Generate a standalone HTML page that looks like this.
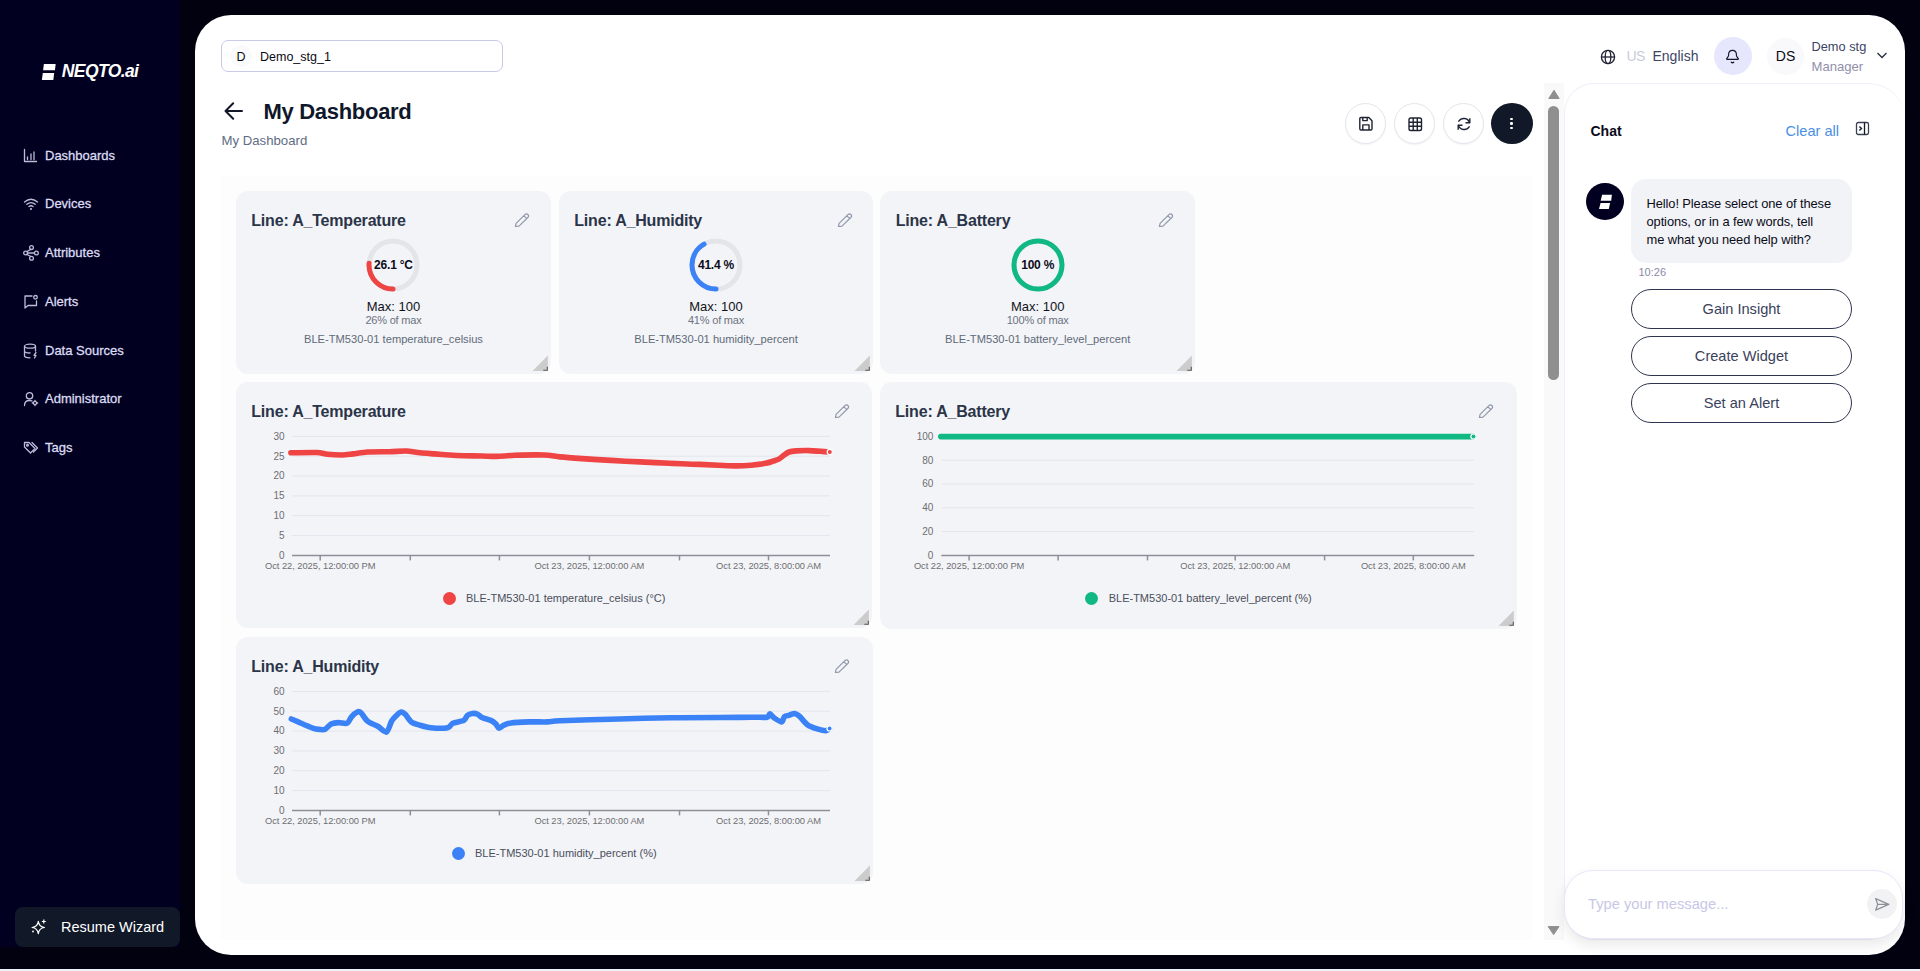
<!DOCTYPE html><html><head><meta charset="utf-8"><style>
html,body{margin:0;padding:0;}
body{width:1920px;height:971px;overflow:hidden;position:relative;background:#02010f;font-family:"Liberation Sans", sans-serif;}
.a{position:absolute;}
.t{position:absolute;white-space:nowrap;font-family:"Liberation Sans", sans-serif;}
</style></head><body>
<div class="a" style="left:0px;top:969px;width:1920px;height:2px;background:#eef2f6;"></div>
<div class="a" style="left:0px;top:0px;width:180px;height:947px;background:#010021;"></div>
<svg class="a" style="left:40px;top:62px;" width="18" height="20" viewBox="0 0 18 20"><path d="M3.9 2.1 H15.7 L14.9 8.3 H3.1 Z" fill="#fff"/><path d="M2.8 11.1 H14.2 L13.3 18 H1.9 Z" fill="#fff"/></svg>
<div class="t" style="left:61.8px;top:63.47px;font-size:17.5px;line-height:17.5px;color:#ffffff;font-weight:700;letter-spacing:-0.6px;font-style:italic;">NEQTO.ai</div>
<div class="t" style="left:45px;top:149.23px;font-size:13px;line-height:13px;color:#dcdcf2;font-weight:400;-webkit-text-stroke:0.3px #dcdcf2;">Dashboards</div>
<div class="t" style="left:45px;top:197.23px;font-size:13px;line-height:13px;color:#dcdcf2;font-weight:400;-webkit-text-stroke:0.3px #dcdcf2;">Devices</div>
<div class="t" style="left:45px;top:245.73px;font-size:13px;line-height:13px;color:#dcdcf2;font-weight:400;-webkit-text-stroke:0.3px #dcdcf2;">Attributes</div>
<div class="t" style="left:45px;top:294.73px;font-size:13px;line-height:13px;color:#dcdcf2;font-weight:400;-webkit-text-stroke:0.3px #dcdcf2;">Alerts</div>
<div class="t" style="left:45px;top:343.73px;font-size:13px;line-height:13px;color:#dcdcf2;font-weight:400;-webkit-text-stroke:0.3px #dcdcf2;">Data Sources</div>
<div class="t" style="left:45px;top:392.23px;font-size:13px;line-height:13px;color:#dcdcf2;font-weight:400;-webkit-text-stroke:0.3px #dcdcf2;">Administrator</div>
<div class="t" style="left:45px;top:440.73px;font-size:13px;line-height:13px;color:#dcdcf2;font-weight:400;-webkit-text-stroke:0.3px #dcdcf2;">Tags</div>
<svg class="a" style="left:23px;top:148px;" width="16" height="16" viewBox="0 0 16 16"><path d="M1.5 1.5 V13.5 H13.5" fill="none" stroke="#bcbcd8" stroke-width="1.3" stroke-linecap="round" stroke-linejoin="round"/><path d="M4.5 9 V11.5 M8 6 V11.5 M11 4 V11.5" fill="none" stroke="#bcbcd8" stroke-width="1.3" stroke-linecap="round" stroke-linejoin="round"/></svg>
<svg class="a" style="left:22.5px;top:196px;" width="16" height="16" viewBox="0 0 16 16"><path d="M1.5 6 Q8 0.5 14.5 6 M3.8 8.3 Q8 4.8 12.2 8.3 M6 10.5 Q8 9 10 10.5" fill="none" stroke="#bcbcd8" stroke-width="1.3" stroke-linecap="round" stroke-linejoin="round"/><circle cx="8" cy="13" r="0.9" fill="#e0e0f0"/></svg>
<svg class="a" style="left:23px;top:245px;" width="16" height="16" viewBox="0 0 16 16"><circle cx="8.5" cy="2.6" r="1.9" fill="none" stroke="#bcbcd8" stroke-width="1.3" stroke-linecap="round" stroke-linejoin="round"/><circle cx="2.6" cy="8" r="1.9" fill="none" stroke="#bcbcd8" stroke-width="1.3" stroke-linecap="round" stroke-linejoin="round"/><circle cx="13.4" cy="8" r="1.9" fill="none" stroke="#bcbcd8" stroke-width="1.3" stroke-linecap="round" stroke-linejoin="round"/><circle cx="8.5" cy="13.2" r="1.9" fill="none" stroke="#bcbcd8" stroke-width="1.3" stroke-linecap="round" stroke-linejoin="round"/><path d="M4.5 8 H11.5 M7.8 4.4 L4 6.5 M7.8 11.5 L4 9.5" fill="none" stroke="#bcbcd8" stroke-width="1.3" stroke-linecap="round" stroke-linejoin="round"/></svg>
<svg class="a" style="left:23px;top:294px;" width="16" height="16" viewBox="0 0 16 16"><path d="M9 2 H2 V14 L5 11.5 H13.5 V7" fill="none" stroke="#bcbcd8" stroke-width="1.3" stroke-linecap="round" stroke-linejoin="round"/><circle cx="12.5" cy="3.3" r="1.8" fill="none" stroke="#bcbcd8" stroke-width="1.3" stroke-linecap="round" stroke-linejoin="round"/></svg>
<svg class="a" style="left:23px;top:343px;" width="16" height="16" viewBox="0 0 16 16"><ellipse cx="7" cy="3.2" rx="5.5" ry="2" fill="none" stroke="#bcbcd8" stroke-width="1.3" stroke-linecap="round" stroke-linejoin="round"/><path d="M1.5 3.2 V12.8 Q1.5 14.8 7 14.8 M12.5 3.2 V8 M1.5 8 Q1.5 10 7 10" fill="none" stroke="#bcbcd8" stroke-width="1.3" stroke-linecap="round" stroke-linejoin="round"/><path d="M13 9.5 L11 12.3 H13 L11.5 15" fill="none" stroke="#bcbcd8" stroke-width="1.3" stroke-linecap="round" stroke-linejoin="round"/></svg>
<svg class="a" style="left:23px;top:391px;" width="16" height="16" viewBox="0 0 16 16"><circle cx="6.5" cy="4.8" r="3.2" fill="none" stroke="#bcbcd8" stroke-width="1.3" stroke-linecap="round" stroke-linejoin="round"/><path d="M1.5 14.5 Q1.5 9.5 6.5 9.5 Q8 9.5 9 10" fill="none" stroke="#bcbcd8" stroke-width="1.3" stroke-linecap="round" stroke-linejoin="round"/><circle cx="12" cy="12" r="1.6" fill="none" stroke="#bcbcd8" stroke-width="1.3" stroke-linecap="round" stroke-linejoin="round"/><path d="M12 9.3 V10 M12 14 V14.7 M9.3 12 H10 M14 12 H14.7" fill="none" stroke="#bcbcd8" stroke-width="1.3" stroke-linecap="round" stroke-linejoin="round"/></svg>
<svg class="a" style="left:23px;top:440px;" width="16" height="16" viewBox="0 0 16 16"><path d="M1.5 2.5 V7 L7.5 13 L12 8.5 L6 2.5 Z" fill="none" stroke="#bcbcd8" stroke-width="1.3" stroke-linecap="round" stroke-linejoin="round"/><circle cx="4.5" cy="5.3" r="0.9" fill="none" stroke="#bcbcd8" stroke-width="1.3" stroke-linecap="round" stroke-linejoin="round"/><path d="M9 2.5 L14.5 8 L10.5 12" fill="none" stroke="#bcbcd8" stroke-width="1.3" stroke-linecap="round" stroke-linejoin="round"/></svg>
<div class="a" style="left:15px;top:907px;width:165px;height:40px;background:#111827;border-radius:8px;"></div>
<svg class="a" style="left:30px;top:918px;" width="18" height="18" viewBox="0 0 18 18"><path d="M8.3 3.3 Q9 8.8 14.5 9.5 Q9 10.2 8.3 15.7 Q7.6 10.2 2.1 9.5 Q7.6 8.8 8.3 3.3 Z" fill="none" stroke="#fff" stroke-width="1.2" stroke-linejoin="round"/><path d="M13.8 1.5 V5.5 M11.8 3.5 H15.8" stroke="#fff" stroke-width="1.2"/><circle cx="3" cy="13.5" r="0.9" fill="#fff"/></svg>
<div class="t" style="left:61px;top:919.71px;font-size:14.5px;line-height:14.5px;color:#ffffff;font-weight:400;">Resume Wizard</div>
<div class="a" style="left:195px;top:15px;width:1710px;height:940px;background:#ffffff;border-radius:36px;"></div>
<div class="a" style="left:221px;top:40px;width:282px;height:32px;box-sizing:border-box;border:1.2px solid #c9c9ea;border-radius:7px;background:#fff;"></div>
<div class="a" style="left:230px;top:45px;width:22px;height:22px;background:#fafafb;border-radius:50%;"></div>
<div class="t" style="left:-259px;width:1000px;text-align:center;top:50.68px;font-size:12.5px;line-height:12.5px;color:#0a0a14;font-weight:400;">D</div>
<div class="t" style="left:260px;top:50.77px;font-size:12.5px;line-height:12.5px;color:#0a0a14;font-weight:400;">Demo_stg_1</div>
<svg class="a" style="left:1599.6px;top:48.5px;" width="16" height="16" viewBox="0 0 16 16"><circle cx="8" cy="8" r="6.6" fill="none" stroke="#1f2233" stroke-width="1.3"/><ellipse cx="8" cy="8" rx="2.8" ry="6.6" fill="none" stroke="#1f2233" stroke-width="1.3"/><path d="M1.4 8 H14.6" stroke="#1f2233" stroke-width="1.3"/></svg>
<div class="t" style="left:1626.5px;top:48.95px;font-size:14px;line-height:14px;color:#c8ccd8;font-weight:400;letter-spacing:-0.5px;">US</div>
<div class="t" style="left:1652.5px;top:48.95px;font-size:14px;line-height:14px;color:#3d4465;font-weight:400;">English</div>
<div class="a" style="left:1714px;top:37.3px;width:38px;height:38px;background:#e6e6fc;border-radius:50%;"></div>
<svg class="a" style="left:1724px;top:47px;" width="18" height="18" viewBox="0 0 18 18"><path d="M2.9 12.4 Q2.3 12.3 2.9 11.4 L4.1 9.7 Q4.6 9 4.6 8 V7.6 Q4.6 3.3 8.5 3.3 Q12.4 3.3 12.4 7.6 V8 Q12.4 9 12.9 9.7 L14.1 11.4 Q14.7 12.3 14.1 12.4 Z" fill="none" stroke="#141826" stroke-width="1.15" stroke-linejoin="round"/><path d="M7.3 15.2 Q8.5 16.3 9.7 15.2" fill="none" stroke="#141826" stroke-width="1.3" stroke-linecap="round"/></svg>
<div class="a" style="left:1767px;top:37.5px;width:37px;height:37px;background:#f9f9fb;border-radius:50%;"></div>
<div class="t" style="left:1285.5px;width:1000px;text-align:center;top:48.95px;font-size:14px;line-height:14px;color:#0a0a14;font-weight:400;">DS</div>
<div class="t" style="left:1811.5px;top:41.03px;font-size:12.8px;line-height:12.8px;color:#3d4465;font-weight:400;">Demo stg</div>
<div class="t" style="left:1811.5px;top:60.49px;font-size:13.1px;line-height:13.1px;color:#9090aa;font-weight:400;">Manager</div>
<svg class="a" style="left:1876px;top:51px;" width="12" height="9" viewBox="0 0 12 9"><path d="M1.5 2 L6 6.5 L10.5 2" fill="none" stroke="#2a2f45" stroke-width="1.4"/></svg>
<svg class="a" style="left:223px;top:101px;" width="22" height="20" viewBox="0 0 22 20"><path d="M19 10 H3 M10.2 2.2 L2.5 10 L10.2 17.8" fill="none" stroke="#111827" stroke-width="2" stroke-linecap="round" stroke-linejoin="round"/></svg>
<div class="t" style="left:263.5px;top:100.60px;font-size:22px;line-height:22px;color:#0f172a;font-weight:700;letter-spacing:-0.3px;">My Dashboard</div>
<div class="t" style="left:221.5px;top:133.94px;font-size:13.2px;line-height:13.2px;color:#5f6c85;font-weight:400;">My Dashboard</div>
<div class="a" style="left:1344.5px;top:102.8px;width:41px;height:41px;box-sizing:border-box;border:1.5px solid #e3e6ec;border-radius:50%;background:#fff;box-shadow:0 1px 2px rgba(0,0,0,0.05);"></div>
<div class="a" style="left:1393.5px;top:102.8px;width:41px;height:41px;box-sizing:border-box;border:1.5px solid #e3e6ec;border-radius:50%;background:#fff;box-shadow:0 1px 2px rgba(0,0,0,0.05);"></div>
<div class="a" style="left:1442.5px;top:102.8px;width:41px;height:41px;box-sizing:border-box;border:1.5px solid #e3e6ec;border-radius:50%;background:#fff;box-shadow:0 1px 2px rgba(0,0,0,0.05);"></div>
<div class="a" style="left:1491.2px;top:102.8px;width:41.6px;height:41.2px;background:#111827;border-radius:50%;"></div>
<svg class="a" style="left:1358px;top:116px;" width="16" height="16" viewBox="0 0 16 16"><path d="M1.8 2.8 Q1.8 1.5 3 1.5 H10.8 L14 4.7 V12.8 Q14 14 12.8 14 H3 Q1.8 14 1.8 12.8 Z" fill="none" stroke="#1e2433" stroke-width="1.4" stroke-linejoin="round"/><path d="M4.8 1.5 V4.6 H9.2 V1.5" fill="none" stroke="#1e2433" stroke-width="1.4" stroke-linejoin="round"/><path d="M4.8 14 V8.9 H11 V14" fill="none" stroke="#1e2433" stroke-width="1.4" stroke-linejoin="round"/></svg>
<svg class="a" style="left:1406.5px;top:115.5px;" width="16" height="16" viewBox="0 0 16 16"><rect x="2" y="2" width="12.5" height="12.5" rx="1.8" fill="none" stroke="#1e2433" stroke-width="1.4" stroke-linejoin="round"/><path d="M6.2 2 V14.5 M10.3 2 V14.5 M2 6.2 H14.5 M2 10.3 H14.5" fill="none" stroke="#1e2433" stroke-width="1.4" stroke-linejoin="round"/></svg>
<svg class="a" style="left:1455.5px;top:115.8px;" width="16" height="16" viewBox="0 0 16 16"><path d="M13.5 6.5 A6 6 0 0 0 2.8 5.2 M2.5 9.5 A6 6 0 0 0 13.2 10.8" fill="none" stroke="#1e2433" stroke-width="1.4" stroke-linejoin="round" stroke-linecap="round"/><path d="M13.8 2.2 V6.8 H9.5" fill="none" stroke="#1e2433" stroke-width="1.4" stroke-linejoin="round"/><path d="M2.2 13.8 V9.2 H6.5" fill="none" stroke="#1e2433" stroke-width="1.4" stroke-linejoin="round"/></svg>
<div class="a" style="left:1510.2px;top:117.60000000000001px;width:2.6px;height:2.6px;background:#fff;border-radius:50%;"></div>
<div class="a" style="left:1510.2px;top:122.10000000000001px;width:2.6px;height:2.6px;background:#fff;border-radius:50%;"></div>
<div class="a" style="left:1510.2px;top:126.60000000000001px;width:2.6px;height:2.6px;background:#fff;border-radius:50%;"></div>
<div class="a" style="left:221px;top:176px;width:1312px;height:764px;background:#fdfdfd;"></div>
<div class="a" style="left:1544px;top:83px;width:19.5px;height:857px;background:#f9f9f9;"></div>
<svg class="a" style="left:1547.5px;top:88.5px;" width="12" height="11" viewBox="0 0 12 11"><path d="M6 1.3 L11.2 9.5 H0.8 Z" fill="#8f8f8f" stroke="#8f8f8f" stroke-width="1" stroke-linejoin="round"/></svg>
<div class="a" style="left:1548px;top:106px;width:11px;height:274px;background:#8f8f8f;border-radius:6px;"></div>
<svg class="a" style="left:1547px;top:924.5px;" width="14" height="11" viewBox="0 0 14 11"><path d="M1.2 1.6 H12 L6.6 9.6 Z" fill="#8f8f8f" stroke="#8f8f8f" stroke-width="1" stroke-linejoin="round"/></svg>
<div class="a" style="left:236px;top:190.8px;width:314.9px;height:183px;background:#f3f4f7;border-radius:12px;"></div>
<svg class="a" style="left:531.9px;top:354.8px;" width="16" height="16" viewBox="0 0 16 16"><path d="M15.9 0.5 V15.9 H0.5 Z" fill="#cccccc"/><path d="M15.3 11.8 V15.3 H11.3" fill="none" stroke="#5a5a5a" stroke-width="1.1"/></svg>
<div class="t" style="left:251.3px;top:213.29px;font-size:16px;line-height:16px;color:#2b3448;font-weight:700;letter-spacing:-0.2px;">Line: A_Temperature</div>
<svg class="a" style="left:514px;top:212px;" width="16" height="16" viewBox="0 0 16 16"><path d="M1.4 14.4 L2.1 11.4 L10.9 2.6 Q12.5 1.1 13.9 2.5 Q15.3 3.9 13.8 5.5 L5 14.1 Z M9.9 3.8 L12.6 6.3" fill="none" stroke="#8e97aa" stroke-width="1.15" stroke-linejoin="round"/></svg>
<svg class="a" style="left:363.45px;top:235px;" width="60" height="60" viewBox="0 0 60 60"><circle cx="30" cy="30" r="24" fill="none" stroke="#e4e5e9" stroke-width="5"/><circle cx="30" cy="30" r="24" fill="none" stroke="#ef4444" stroke-width="5" stroke-linecap="round" stroke-dasharray="39.21 150.80" transform="rotate(90 30 30)"/></svg>
<div class="t" style="left:-106.55000000000001px;width:1000px;text-align:center;top:258.72px;font-size:12px;line-height:12px;color:#0b0b1a;font-weight:700;letter-spacing:-0.2px;">26.1 °C</div>
<div class="t" style="left:-106.55000000000001px;width:1000px;text-align:center;top:300.03px;font-size:13px;line-height:13px;color:#111320;font-weight:400;">Max: 100</div>
<div class="t" style="left:-106.55000000000001px;width:1000px;text-align:center;top:314.70px;font-size:11px;line-height:11px;color:#6b7280;font-weight:400;letter-spacing:-0.2px;">26% of max</div>
<div class="t" style="left:-106.55000000000001px;width:1000px;text-align:center;top:333.63px;font-size:11.15px;line-height:11.15px;color:#5f6b7a;font-weight:400;">BLE-TM530-01 temperature_celsius</div>
<div class="a" style="left:559px;top:190.8px;width:314px;height:183px;background:#f3f4f7;border-radius:12px;"></div>
<svg class="a" style="left:854px;top:354.8px;" width="16" height="16" viewBox="0 0 16 16"><path d="M15.9 0.5 V15.9 H0.5 Z" fill="#cccccc"/><path d="M15.3 11.8 V15.3 H11.3" fill="none" stroke="#5a5a5a" stroke-width="1.1"/></svg>
<div class="t" style="left:574.3px;top:213.29px;font-size:16px;line-height:16px;color:#2b3448;font-weight:700;letter-spacing:-0.2px;">Line: A_Humidity</div>
<svg class="a" style="left:837px;top:212px;" width="16" height="16" viewBox="0 0 16 16"><path d="M1.4 14.4 L2.1 11.4 L10.9 2.6 Q12.5 1.1 13.9 2.5 Q15.3 3.9 13.8 5.5 L5 14.1 Z M9.9 3.8 L12.6 6.3" fill="none" stroke="#8e97aa" stroke-width="1.15" stroke-linejoin="round"/></svg>
<svg class="a" style="left:686.0px;top:235px;" width="60" height="60" viewBox="0 0 60 60"><circle cx="30" cy="30" r="24" fill="none" stroke="#e4e5e9" stroke-width="5"/><circle cx="30" cy="30" r="24" fill="none" stroke="#3b82f6" stroke-width="5" stroke-linecap="round" stroke-dasharray="62.43 150.80" transform="rotate(90 30 30)"/></svg>
<div class="t" style="left:216.0px;width:1000px;text-align:center;top:258.72px;font-size:12px;line-height:12px;color:#0b0b1a;font-weight:700;letter-spacing:-0.2px;">41.4 %</div>
<div class="t" style="left:216.0px;width:1000px;text-align:center;top:300.03px;font-size:13px;line-height:13px;color:#111320;font-weight:400;">Max: 100</div>
<div class="t" style="left:216.0px;width:1000px;text-align:center;top:314.70px;font-size:11px;line-height:11px;color:#6b7280;font-weight:400;letter-spacing:-0.2px;">41% of max</div>
<div class="t" style="left:216.0px;width:1000px;text-align:center;top:333.63px;font-size:11.15px;line-height:11.15px;color:#5f6b7a;font-weight:400;">BLE-TM530-01 humidity_percent</div>
<div class="a" style="left:880.4px;top:190.8px;width:314.6px;height:183px;background:#f3f4f7;border-radius:12px;"></div>
<svg class="a" style="left:1176.0px;top:354.8px;" width="16" height="16" viewBox="0 0 16 16"><path d="M15.9 0.5 V15.9 H0.5 Z" fill="#cccccc"/><path d="M15.3 11.8 V15.3 H11.3" fill="none" stroke="#5a5a5a" stroke-width="1.1"/></svg>
<div class="t" style="left:895.6999999999999px;top:213.29px;font-size:16px;line-height:16px;color:#2b3448;font-weight:700;letter-spacing:-0.2px;">Line: A_Battery</div>
<svg class="a" style="left:1158.4px;top:212px;" width="16" height="16" viewBox="0 0 16 16"><path d="M1.4 14.4 L2.1 11.4 L10.9 2.6 Q12.5 1.1 13.9 2.5 Q15.3 3.9 13.8 5.5 L5 14.1 Z M9.9 3.8 L12.6 6.3" fill="none" stroke="#8e97aa" stroke-width="1.15" stroke-linejoin="round"/></svg>
<svg class="a" style="left:1007.7px;top:235px;" width="60" height="60" viewBox="0 0 60 60"><circle cx="30" cy="30" r="24" fill="none" stroke="#e4e5e9" stroke-width="5"/><circle cx="30" cy="30" r="24" fill="none" stroke="#10b981" stroke-width="5"/></svg>
<div class="t" style="left:537.7px;width:1000px;text-align:center;top:258.72px;font-size:12px;line-height:12px;color:#0b0b1a;font-weight:700;letter-spacing:-0.2px;">100 %</div>
<div class="t" style="left:537.7px;width:1000px;text-align:center;top:300.03px;font-size:13px;line-height:13px;color:#111320;font-weight:400;">Max: 100</div>
<div class="t" style="left:537.7px;width:1000px;text-align:center;top:314.70px;font-size:11px;line-height:11px;color:#6b7280;font-weight:400;letter-spacing:-0.2px;">100% of max</div>
<div class="t" style="left:537.7px;width:1000px;text-align:center;top:333.63px;font-size:11.15px;line-height:11.15px;color:#5f6b7a;font-weight:400;">BLE-TM530-01 battery_level_percent</div>
<div class="a" style="left:236px;top:382px;width:636.4px;height:246.4px;background:#f3f4f7;border-radius:12px;"></div>
<svg class="a" style="left:853.4px;top:609.4px;" width="16" height="16" viewBox="0 0 16 16"><path d="M15.9 0.5 V15.9 H0.5 Z" fill="#cccccc"/><path d="M15.3 11.8 V15.3 H11.3" fill="none" stroke="#5a5a5a" stroke-width="1.1"/></svg>
<div class="t" style="left:251.3px;top:403.79px;font-size:16px;line-height:16px;color:#2b3448;font-weight:700;letter-spacing:-0.2px;">Line: A_Temperature</div>
<svg class="a" style="left:834px;top:403px;" width="16" height="16" viewBox="0 0 16 16"><path d="M1.4 14.4 L2.1 11.4 L10.9 2.6 Q12.5 1.1 13.9 2.5 Q15.3 3.9 13.8 5.5 L5 14.1 Z M9.9 3.8 L12.6 6.3" fill="none" stroke="#8e97aa" stroke-width="1.15" stroke-linejoin="round"/></svg>
<svg class="a" style="left:0;top:0" width="1920" height="971" viewBox="0 0 1920 971"><line x1="292" y1="535.6" x2="830" y2="535.6" stroke="#e2e6ee" stroke-width="1"/><line x1="292" y1="515.7" x2="830" y2="515.7" stroke="#e2e6ee" stroke-width="1"/><line x1="292" y1="495.9" x2="830" y2="495.9" stroke="#e2e6ee" stroke-width="1"/><line x1="292" y1="476.1" x2="830" y2="476.1" stroke="#e2e6ee" stroke-width="1"/><line x1="292" y1="456.2" x2="830" y2="456.2" stroke="#e2e6ee" stroke-width="1"/><line x1="292" y1="436.4" x2="830" y2="436.4" stroke="#e2e6ee" stroke-width="1"/><line x1="292" y1="555.4" x2="830" y2="555.4" stroke="#8a8f99" stroke-width="1.5"/><line x1="320.2" y1="555.4" x2="320.2" y2="560.4" stroke="#8a8f99" stroke-width="1.5"/><line x1="410.3" y1="555.4" x2="410.3" y2="560.4" stroke="#8a8f99" stroke-width="1.5"/><line x1="499.4" y1="555.4" x2="499.4" y2="560.4" stroke="#8a8f99" stroke-width="1.5"/><line x1="589.4" y1="555.4" x2="589.4" y2="560.4" stroke="#8a8f99" stroke-width="1.5"/><line x1="679.5" y1="555.4" x2="679.5" y2="560.4" stroke="#8a8f99" stroke-width="1.5"/><line x1="768.5" y1="555.4" x2="768.5" y2="560.4" stroke="#8a8f99" stroke-width="1.5"/><path d="M290.9,452.8 C294.5,452.8 311.4,452.3 316.5,452.5 C321.6,452.7 323.8,453.8 327.4,454.2 C331.0,454.6 338.4,455.0 342.0,455.0 C345.6,455.0 349.3,454.3 352.9,453.9 C356.5,453.5 362.4,452.3 367.5,452.0 C372.6,451.7 384.0,451.8 389.4,451.7 C394.8,451.6 401.9,450.8 406.2,451.0 C410.5,451.2 416.0,452.4 420.0,452.8 C424.0,453.2 430.5,453.6 434.6,453.9 C438.7,454.2 445.1,454.7 449.2,455.0 C453.3,455.3 459.2,455.6 463.8,455.7 C468.4,455.8 477.4,455.9 482.0,456.0 C486.6,456.1 492.0,456.5 496.6,456.4 C501.2,456.3 508.2,455.5 514.8,455.3 C521.4,455.1 537.7,454.8 544.0,455.0 C550.3,455.2 554.7,456.4 560.0,456.9 C565.3,457.4 574.8,458.1 581.9,458.6 C589.0,459.1 602.8,459.9 611.0,460.4 C619.2,460.9 632.0,461.5 640.2,461.9 C648.4,462.3 661.0,462.9 669.4,463.3 C677.8,463.7 693.2,464.1 700.0,464.4 C706.8,464.7 713.1,465.0 718.2,465.2 C723.3,465.4 731.9,465.9 736.5,465.9 C741.1,465.9 746.9,465.6 751.0,465.2 C755.1,464.8 762.5,463.9 765.6,463.3 C768.7,462.7 771.1,461.8 772.9,461.2 C774.7,460.6 777.3,459.9 778.8,459.1 C780.3,458.3 782.5,456.3 783.9,455.3 C785.3,454.3 787.3,452.6 789.0,452.0 C790.7,451.4 793.4,451.1 796.3,450.9 C799.2,450.7 806.0,450.5 809.4,450.6 C812.8,450.7 817.4,451.1 820.3,451.3 C823.2,451.5 828.5,451.9 829.8,452.0" fill="none" stroke="#ef4444" stroke-width="5.6" stroke-linecap="round" stroke-linejoin="round"/><circle cx="829.8" cy="452" r="2.6" fill="#ef4444" stroke="#fff" stroke-width="1.2"/></svg>
<div class="t" style="left:-715.4px;width:1000px;text-align:right;top:550.78px;font-size:10px;line-height:10px;color:#6e6e72;font-weight:400;">0</div>
<div class="t" style="left:-715.4px;width:1000px;text-align:right;top:530.95px;font-size:10px;line-height:10px;color:#6e6e72;font-weight:400;">5</div>
<div class="t" style="left:-715.4px;width:1000px;text-align:right;top:511.11px;font-size:10px;line-height:10px;color:#6e6e72;font-weight:400;">10</div>
<div class="t" style="left:-715.4px;width:1000px;text-align:right;top:491.28px;font-size:10px;line-height:10px;color:#6e6e72;font-weight:400;">15</div>
<div class="t" style="left:-715.4px;width:1000px;text-align:right;top:471.45px;font-size:10px;line-height:10px;color:#6e6e72;font-weight:400;">20</div>
<div class="t" style="left:-715.4px;width:1000px;text-align:right;top:451.61px;font-size:10px;line-height:10px;color:#6e6e72;font-weight:400;">25</div>
<div class="t" style="left:-715.4px;width:1000px;text-align:right;top:431.78px;font-size:10px;line-height:10px;color:#6e6e72;font-weight:400;">30</div>
<div class="t" style="left:-179.8px;width:1000px;text-align:center;top:561.99px;font-size:9.35px;line-height:9.35px;color:#6e6e72;font-weight:400;letter-spacing:-0.05px;">Oct 22, 2025, 12:00:00 PM</div>
<div class="t" style="left:89.39999999999998px;width:1000px;text-align:center;top:561.99px;font-size:9.35px;line-height:9.35px;color:#6e6e72;font-weight:400;letter-spacing:-0.05px;">Oct 23, 2025, 12:00:00 AM</div>
<div class="t" style="left:268.5px;width:1000px;text-align:center;top:561.99px;font-size:9.35px;line-height:9.35px;color:#6e6e72;font-weight:400;letter-spacing:-0.05px;">Oct 23, 2025, 8:00:00 AM</div>
<div class="a" style="left:442.5px;top:591.5px;width:13px;height:13px;background:#ef4444;border-radius:50%;"></div>
<div class="t" style="left:466px;top:592.90px;font-size:11px;line-height:11px;color:#4a4f5c;font-weight:400;">BLE-TM530-01 temperature_celsius (°C)</div>
<div class="a" style="left:880px;top:382px;width:636.8px;height:246.8px;background:#f3f4f7;border-radius:12px;"></div>
<svg class="a" style="left:1497.8px;top:609.8px;" width="16" height="16" viewBox="0 0 16 16"><path d="M15.9 0.5 V15.9 H0.5 Z" fill="#cccccc"/><path d="M15.3 11.8 V15.3 H11.3" fill="none" stroke="#5a5a5a" stroke-width="1.1"/></svg>
<div class="t" style="left:895.3px;top:403.79px;font-size:16px;line-height:16px;color:#2b3448;font-weight:700;letter-spacing:-0.2px;">Line: A_Battery</div>
<svg class="a" style="left:1478px;top:403px;" width="16" height="16" viewBox="0 0 16 16"><path d="M1.4 14.4 L2.1 11.4 L10.9 2.6 Q12.5 1.1 13.9 2.5 Q15.3 3.9 13.8 5.5 L5 14.1 Z M9.9 3.8 L12.6 6.3" fill="none" stroke="#8e97aa" stroke-width="1.15" stroke-linejoin="round"/></svg>
<svg class="a" style="left:0;top:0" width="1920" height="971" viewBox="0 0 1920 971"><line x1="941.3" y1="531.6" x2="1474.2" y2="531.6" stroke="#e2e6ee" stroke-width="1"/><line x1="941.3" y1="507.8" x2="1474.2" y2="507.8" stroke="#e2e6ee" stroke-width="1"/><line x1="941.3" y1="484.0" x2="1474.2" y2="484.0" stroke="#e2e6ee" stroke-width="1"/><line x1="941.3" y1="460.2" x2="1474.2" y2="460.2" stroke="#e2e6ee" stroke-width="1"/><line x1="941.3" y1="436.4" x2="1474.2" y2="436.4" stroke="#e2e6ee" stroke-width="1"/><line x1="941.3" y1="555.4" x2="1474.2" y2="555.4" stroke="#8a8f99" stroke-width="1.5"/><line x1="969.1" y1="555.4" x2="969.1" y2="560.4" stroke="#8a8f99" stroke-width="1.5"/><line x1="1058.1" y1="555.4" x2="1058.1" y2="560.4" stroke="#8a8f99" stroke-width="1.5"/><line x1="1147.5" y1="555.4" x2="1147.5" y2="560.4" stroke="#8a8f99" stroke-width="1.5"/><line x1="1235.2" y1="555.4" x2="1235.2" y2="560.4" stroke="#8a8f99" stroke-width="1.5"/><line x1="1324.6" y1="555.4" x2="1324.6" y2="560.4" stroke="#8a8f99" stroke-width="1.5"/><line x1="1413.3" y1="555.4" x2="1413.3" y2="560.4" stroke="#8a8f99" stroke-width="1.5"/><path d="M940.8,436.6 C1015.4,436.6 1398.9,436.6 1473.5,436.6" fill="none" stroke="#10b981" stroke-width="5.6" stroke-linecap="round" stroke-linejoin="round"/><circle cx="1473.5" cy="436.6" r="2.6" fill="#10b981" stroke="#fff" stroke-width="1.2"/></svg>
<div class="t" style="left:-66.60000000000002px;width:1000px;text-align:right;top:550.78px;font-size:10px;line-height:10px;color:#6e6e72;font-weight:400;">0</div>
<div class="t" style="left:-66.60000000000002px;width:1000px;text-align:right;top:526.98px;font-size:10px;line-height:10px;color:#6e6e72;font-weight:400;">20</div>
<div class="t" style="left:-66.60000000000002px;width:1000px;text-align:right;top:503.18px;font-size:10px;line-height:10px;color:#6e6e72;font-weight:400;">40</div>
<div class="t" style="left:-66.60000000000002px;width:1000px;text-align:right;top:479.38px;font-size:10px;line-height:10px;color:#6e6e72;font-weight:400;">60</div>
<div class="t" style="left:-66.60000000000002px;width:1000px;text-align:right;top:455.58px;font-size:10px;line-height:10px;color:#6e6e72;font-weight:400;">80</div>
<div class="t" style="left:-66.60000000000002px;width:1000px;text-align:right;top:431.78px;font-size:10px;line-height:10px;color:#6e6e72;font-weight:400;">100</div>
<div class="t" style="left:469.1px;width:1000px;text-align:center;top:561.99px;font-size:9.35px;line-height:9.35px;color:#6e6e72;font-weight:400;letter-spacing:-0.05px;">Oct 22, 2025, 12:00:00 PM</div>
<div class="t" style="left:735.2px;width:1000px;text-align:center;top:561.99px;font-size:9.35px;line-height:9.35px;color:#6e6e72;font-weight:400;letter-spacing:-0.05px;">Oct 23, 2025, 12:00:00 AM</div>
<div class="t" style="left:913.3px;width:1000px;text-align:center;top:561.99px;font-size:9.35px;line-height:9.35px;color:#6e6e72;font-weight:400;letter-spacing:-0.05px;">Oct 23, 2025, 8:00:00 AM</div>
<div class="a" style="left:1085.2px;top:591.5px;width:13px;height:13px;background:#10b981;border-radius:50%;"></div>
<div class="t" style="left:1108.7px;top:592.90px;font-size:11px;line-height:11px;color:#4a4f5c;font-weight:400;">BLE-TM530-01 battery_level_percent (%)</div>
<div class="a" style="left:236px;top:637px;width:636.6px;height:246.8px;background:#f3f4f7;border-radius:12px;"></div>
<svg class="a" style="left:853.6px;top:864.8px;" width="16" height="16" viewBox="0 0 16 16"><path d="M15.9 0.5 V15.9 H0.5 Z" fill="#cccccc"/><path d="M15.3 11.8 V15.3 H11.3" fill="none" stroke="#5a5a5a" stroke-width="1.1"/></svg>
<div class="t" style="left:251.3px;top:658.79px;font-size:16px;line-height:16px;color:#2b3448;font-weight:700;letter-spacing:-0.2px;">Line: A_Humidity</div>
<svg class="a" style="left:834px;top:658px;" width="16" height="16" viewBox="0 0 16 16"><path d="M1.4 14.4 L2.1 11.4 L10.9 2.6 Q12.5 1.1 13.9 2.5 Q15.3 3.9 13.8 5.5 L5 14.1 Z M9.9 3.8 L12.6 6.3" fill="none" stroke="#8e97aa" stroke-width="1.15" stroke-linejoin="round"/></svg>
<svg class="a" style="left:0;top:0" width="1920" height="971" viewBox="0 0 1920 971"><line x1="292" y1="790.6" x2="830" y2="790.6" stroke="#e2e6ee" stroke-width="1"/><line x1="292" y1="770.7" x2="830" y2="770.7" stroke="#e2e6ee" stroke-width="1"/><line x1="292" y1="750.9" x2="830" y2="750.9" stroke="#e2e6ee" stroke-width="1"/><line x1="292" y1="731.1" x2="830" y2="731.1" stroke="#e2e6ee" stroke-width="1"/><line x1="292" y1="711.2" x2="830" y2="711.2" stroke="#e2e6ee" stroke-width="1"/><line x1="292" y1="691.4" x2="830" y2="691.4" stroke="#e2e6ee" stroke-width="1"/><line x1="292" y1="810.4" x2="830" y2="810.4" stroke="#8a8f99" stroke-width="1.5"/><line x1="320.2" y1="810.4" x2="320.2" y2="815.4" stroke="#8a8f99" stroke-width="1.5"/><line x1="410.3" y1="810.4" x2="410.3" y2="815.4" stroke="#8a8f99" stroke-width="1.5"/><line x1="499.4" y1="810.4" x2="499.4" y2="815.4" stroke="#8a8f99" stroke-width="1.5"/><line x1="589.4" y1="810.4" x2="589.4" y2="815.4" stroke="#8a8f99" stroke-width="1.5"/><line x1="679.5" y1="810.4" x2="679.5" y2="815.4" stroke="#8a8f99" stroke-width="1.5"/><line x1="768.5" y1="810.4" x2="768.5" y2="815.4" stroke="#8a8f99" stroke-width="1.5"/><path d="M291.3,719.0 C292.3,719.4 295.2,720.6 298.2,721.9 C301.2,723.2 309.7,727.0 312.8,728.1 C315.9,729.2 318.4,729.3 320.1,729.5 C321.8,729.7 323.7,730.0 325.2,729.2 C326.7,728.4 329.3,725.0 331.1,724.1 C332.9,723.2 336.2,722.7 338.4,722.6 C340.6,722.5 345.3,724.1 347.1,723.3 C348.9,722.5 350.1,718.4 351.5,716.8 C352.9,715.2 356.0,712.6 357.3,712.0 C358.6,711.4 359.6,711.5 361.0,712.8 C362.4,714.1 365.2,719.3 367.5,721.2 C369.8,723.1 375.0,724.8 377.7,726.3 C380.4,727.8 384.6,732.8 386.5,732.1 C388.4,731.4 390.3,723.5 391.6,721.2 C392.9,718.9 394.7,717.3 396.0,716.0 C397.3,714.7 399.8,712.2 401.1,712.0 C402.4,711.8 404.1,713.2 405.5,714.6 C406.9,716.0 409.3,720.4 411.3,721.9 C413.3,723.4 417.3,724.4 420.0,725.2 C422.7,726.0 427.0,727.4 430.9,727.7 C434.8,728.1 444.6,728.3 447.7,727.7 C450.8,727.1 450.5,724.3 452.8,723.3 C455.1,722.3 461.8,721.5 463.8,720.4 C465.8,719.3 466.2,716.3 467.4,715.3 C468.6,714.3 471.1,713.7 472.5,713.5 C473.9,713.3 476.3,713.6 477.6,714.2 C478.9,714.8 480.2,716.6 482.0,717.5 C483.8,718.4 488.9,719.5 490.8,720.4 C492.7,721.3 494.8,723.0 495.9,724.1 C497.0,725.2 497.7,727.9 498.8,728.1 C499.9,728.3 502.2,725.9 503.9,725.2 C505.6,724.5 507.6,723.5 511.2,723.0 C514.8,722.5 524.3,722.1 529.4,721.9 C534.5,721.7 543.3,722.1 547.6,721.9 C551.9,721.7 551.2,721.2 560.0,720.8 C568.8,720.4 594.9,719.6 610.4,719.2 C625.9,718.8 652.7,718.0 670.8,717.7 C688.9,717.4 728.1,717.5 740.0,717.4 C751.9,717.3 751.8,717.2 755.6,717.2 C759.4,717.2 765.1,717.7 767.1,717.2 C769.1,716.7 768.9,713.7 769.9,713.8 C770.9,713.9 772.2,716.6 773.9,717.7 C775.6,718.8 780.2,722.0 781.7,721.9 C783.2,721.8 783.2,717.7 784.3,716.7 C785.4,715.7 788.0,715.5 789.5,715.1 C791.0,714.7 793.2,713.3 794.7,713.5 C796.2,713.7 798.1,715.1 799.9,716.7 C801.7,718.3 805.2,723.2 807.7,725.0 C810.2,726.8 815.6,728.4 818.1,729.2 C820.6,730.0 824.3,730.8 825.9,730.7 C827.5,730.6 829.1,728.7 829.6,728.4" fill="none" stroke="#3b82f6" stroke-width="5.6" stroke-linecap="round" stroke-linejoin="round"/><circle cx="829.6" cy="728.4" r="2.6" fill="#3b82f6" stroke="#fff" stroke-width="1.2"/></svg>
<div class="t" style="left:-715.4px;width:1000px;text-align:right;top:805.78px;font-size:10px;line-height:10px;color:#6e6e72;font-weight:400;">0</div>
<div class="t" style="left:-715.4px;width:1000px;text-align:right;top:785.95px;font-size:10px;line-height:10px;color:#6e6e72;font-weight:400;">10</div>
<div class="t" style="left:-715.4px;width:1000px;text-align:right;top:766.11px;font-size:10px;line-height:10px;color:#6e6e72;font-weight:400;">20</div>
<div class="t" style="left:-715.4px;width:1000px;text-align:right;top:746.28px;font-size:10px;line-height:10px;color:#6e6e72;font-weight:400;">30</div>
<div class="t" style="left:-715.4px;width:1000px;text-align:right;top:726.45px;font-size:10px;line-height:10px;color:#6e6e72;font-weight:400;">40</div>
<div class="t" style="left:-715.4px;width:1000px;text-align:right;top:706.61px;font-size:10px;line-height:10px;color:#6e6e72;font-weight:400;">50</div>
<div class="t" style="left:-715.4px;width:1000px;text-align:right;top:686.78px;font-size:10px;line-height:10px;color:#6e6e72;font-weight:400;">60</div>
<div class="t" style="left:-179.8px;width:1000px;text-align:center;top:816.99px;font-size:9.35px;line-height:9.35px;color:#6e6e72;font-weight:400;letter-spacing:-0.05px;">Oct 22, 2025, 12:00:00 PM</div>
<div class="t" style="left:89.39999999999998px;width:1000px;text-align:center;top:816.99px;font-size:9.35px;line-height:9.35px;color:#6e6e72;font-weight:400;letter-spacing:-0.05px;">Oct 23, 2025, 12:00:00 AM</div>
<div class="t" style="left:268.5px;width:1000px;text-align:center;top:816.99px;font-size:9.35px;line-height:9.35px;color:#6e6e72;font-weight:400;letter-spacing:-0.05px;">Oct 23, 2025, 8:00:00 AM</div>
<div class="a" style="left:451.5px;top:846.5px;width:13px;height:13px;background:#3b82f6;border-radius:50%;"></div>
<div class="t" style="left:475px;top:847.90px;font-size:11px;line-height:11px;color:#4a4f5c;font-weight:400;">BLE-TM530-01 humidity_percent (%)</div>
<div class="a" style="left:1564px;top:83px;width:341px;height:857px;box-sizing:border-box;border:1px solid #efeffb;border-right:none;border-radius:30px 36px 36px 30px;background:#fff;"></div>
<div class="t" style="left:1590.5px;top:123.85px;font-size:14px;line-height:14px;color:#0a0a1a;font-weight:700;">Chat</div>
<div class="t" style="left:1785.5px;top:123.56px;font-size:14.6px;line-height:14.6px;color:#4a90e2;font-weight:400;">Clear all</div>
<svg class="a" style="left:1855px;top:121px;" width="16" height="16" viewBox="0 0 16 16"><rect x="1.5" y="1.5" width="12" height="12" rx="1.8" fill="none" stroke="#374151" stroke-width="1.3"/><path d="M9.5 1.5 V13.5" stroke="#141826" stroke-width="1.3"/><path d="M4.4 5.4 L6.5 7.5 L4.4 9.6" fill="none" stroke="#1f2433" stroke-width="1.45"/></svg>
<div class="a" style="left:1586px;top:182.6px;width:38px;height:37.4px;background:#010021;border-radius:50%;"></div>
<svg class="a" style="left:1595px;top:191px;" width="20" height="20" viewBox="0 0 20 20"><path d="M7.1 3.8 H16.9 L16.2 9.7 H5.6 Z" fill="#fff"/><path d="M5.6 12 H15.1 L13.8 18 H4 Z" fill="#fff"/></svg>
<div class="a" style="left:1631px;top:179px;width:221px;height:84px;background:#f2f3f6;border-radius:15px;"></div>
<div class="t" style="left:1646.5px;top:197.98px;font-size:12.9px;line-height:12.9px;color:#0a0b18;font-weight:400;letter-spacing:-0.1px;">Hello! Please select one of these</div>
<div class="t" style="left:1646.5px;top:215.98px;font-size:12.9px;line-height:12.9px;color:#0a0b18;font-weight:400;letter-spacing:-0.1px;">options, or in a few words, tell</div>
<div class="t" style="left:1646.5px;top:233.98px;font-size:12.9px;line-height:12.9px;color:#0a0b18;font-weight:400;letter-spacing:-0.1px;">me what you need help with?</div>
<div class="t" style="left:1638.5px;top:266.70px;font-size:11px;line-height:11px;color:#8a8aa8;font-weight:400;">10:26</div>
<div class="a" style="left:1631px;top:289px;width:221px;height:40px;box-sizing:border-box;border:1.4px solid #2f3550;border-radius:20px;"></div>
<div class="t" style="left:1241.5px;width:1000px;text-align:center;top:301.76px;font-size:14.6px;line-height:14.6px;color:#3a3f5c;font-weight:400;">Gain Insight</div>
<div class="a" style="left:1631px;top:336px;width:221px;height:40px;box-sizing:border-box;border:1.4px solid #2f3550;border-radius:20px;"></div>
<div class="t" style="left:1241.5px;width:1000px;text-align:center;top:348.76px;font-size:14.6px;line-height:14.6px;color:#3a3f5c;font-weight:400;">Create Widget</div>
<div class="a" style="left:1631px;top:383px;width:221px;height:40px;box-sizing:border-box;border:1.4px solid #2f3550;border-radius:20px;"></div>
<div class="t" style="left:1241.5px;width:1000px;text-align:center;top:395.76px;font-size:14.6px;line-height:14.6px;color:#3a3f5c;font-weight:400;">Set an Alert</div>
<div class="a" style="left:1564px;top:869.5px;width:339px;height:69.5px;box-sizing:border-box;border:1.2px solid #e8e8fa;border-radius:29px;background:#fff;box-shadow:0 6px 14px rgba(0,0,0,0.09);"></div>
<div class="t" style="left:1588px;top:896.71px;font-size:14.7px;line-height:14.7px;color:#c7c7e6;font-weight:400;">Type your message...</div>
<div class="a" style="left:1867px;top:889px;width:30px;height:30px;background:#f2f2f5;border-radius:50%;"></div>
<svg class="a" style="left:1873px;top:896px;" width="18" height="18" viewBox="0 0 18 18"><path d="M2.7 2.6 L15.8 8.4 L2.7 14.1 L4.7 8.4 Z M4.7 8.4 H15.8" fill="none" stroke="#8e9098" stroke-width="1.3" stroke-linejoin="round"/></svg>
</body></html>
